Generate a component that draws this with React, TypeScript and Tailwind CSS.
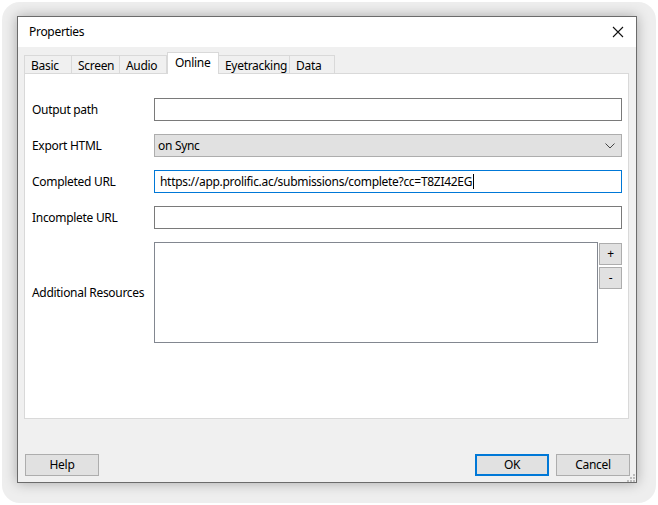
import React from "react";

const font = { fontFamily: '"Noto Sans", "Open Sans", sans-serif' };

function Tab({ label, w, selected }: { label: string; w: number; selected?: boolean }) {
  if (selected) {
    return (
      <div
        className="relative z-10 h-[22px] shrink-0 border border-b-0 border-[#d9d9d9] bg-white pl-[7px] pt-[2px] text-[12px] leading-[16px] text-black"
        style={{ width: w }}
      >
        {label}
      </div>
    );
  }
  return (
    <div
      className="h-[19px] shrink-0 border border-b-0 border-l-0 border-[#d9d9d9] bg-[#f0f0f0] pl-[6px] pt-[2px] text-[12px] leading-[16px] text-black first:border-l"
      style={{ width: w }}
    >
      {label}
    </div>
  );
}

function Row({ label, children }: { label: string; children: React.ReactNode }) {
  return (
    <div className="flex h-[23px] items-center">
      <div className="w-[122px] text-[12px] text-black">{label}</div>
      <div className="flex-1">{children}</div>
    </div>
  );
}

export default function App() {
  return (
    <div className="h-[505px] w-[658px] bg-white p-[2px] tracking-[-0.3px]" style={font}>
      <div className="h-[501px] w-[654px] rounded-[18px] bg-[#eeeeee] pl-[15px] pt-[14px]">
        <div className="flex h-[467px] w-[620px] flex-col border border-[#6b6b6b] bg-[#f0f0f0] shadow-[0_0_12px_rgba(0,0,0,0.3)]">
          {/* title bar */}
          <div className="flex h-[30px] items-center justify-between bg-white pl-[11px] pr-[9px]">
            <span className="text-[12px] text-black">Properties</span>
            <svg width="12" height="12" viewBox="0 0 12 12" className="mr-[3px]">
              <path d="M1 1L11 11M11 1L1 11" stroke="#111" strokeWidth="1.1" />
            </svg>
          </div>

          {/* tabs + pane */}
          <div className="ml-[6px] mr-[7px] mt-[5px] flex flex-col">
            <div className="flex h-[22px] items-end">
              <Tab label="Basic" w={48} />
              <Tab label="Screen" w={48} />
              <Tab label="Audio" w={47} />
              <Tab label="Online" w={52} selected />
              <Tab label="Eyetracking" w={71} />
              <Tab label="Data" w={45} />
            </div>
            <div className="-mt-px flex h-[346px] flex-col gap-[13px] border border-[#d9d9d9] bg-white pl-[7px] pr-[6px] pt-[24px]">
              <Row label="Output path">
                <div className="h-[23px] border border-[#7a7a7a] bg-white" />
              </Row>
              <Row label="Export HTML">
                <div className="flex h-[23px] items-center justify-between border border-[#adadad] bg-[#e1e1e1] pl-[3px] pr-[6px] text-[12px] text-black">
                  <span>on Sync</span>
                  <svg width="10" height="6" viewBox="0 0 10 6">
                    <path d="M0.5 0.5L5 5L9.5 0.5" fill="none" stroke="#444" strokeWidth="1" />
                  </svg>
                </div>
              </Row>
              <Row label="Completed URL">
                <div className="flex h-[23px] items-center border border-[#0078d7] bg-white pl-[5px] text-[12px] text-black">
                  <span>https://app.prolific.ac/submissions/complete?cc=T8ZI42EG</span>
                  <span className="ml-[1px] h-[15px] w-px bg-black" />
                </div>
              </Row>
              <Row label="Incomplete URL">
                <div className="h-[23px] border border-[#7a7a7a] bg-white" />
              </Row>
              <div className="flex h-[101px] items-center">
                <div className="w-[122px] text-[12px] text-black">Additional Resources</div>
                <div className="flex flex-1 items-start gap-[1px]">
                  <div className="h-[101px] flex-1 border border-[#828790] bg-white" />
                  <div className="flex flex-col gap-[2px] pt-[1px]">
                    <div className="flex h-[22px] w-[23px] items-center justify-center border border-[#adadad] bg-[#e1e1e1] text-[12px] leading-none text-black">
                      +
                    </div>
                    <div className="flex h-[22px] w-[23px] items-center justify-center border border-[#adadad] bg-[#e1e1e1] text-[12px] leading-none text-black">
                      -
                    </div>
                  </div>
                </div>
              </div>
            </div>
          </div>

          {/* buttons */}
          <div className="relative mt-[35px] flex h-[22px] items-center pl-[7px] pr-[6px]">
            <div className="flex h-[22px] w-[74px] items-center justify-center border border-[#adadad] bg-[#e1e1e1] text-[12px] text-black">
              Help
            </div>
            <div className="flex-1" />
            <div className="flex h-[22px] w-[74px] items-center justify-center border-2 border-[#0078d7] bg-[#e1e1e1] text-[12px] text-black">
              OK
            </div>
            <div className="ml-[7px] flex h-[22px] w-[74px] items-center justify-center border border-[#adadad] bg-[#e1e1e1] text-[12px] text-black">
              Cancel
            </div>
            <svg width="8" height="8" viewBox="0 0 8 8" className="absolute bottom-[-6px] right-[1px]">
              <rect x="6" y="0" width="2" height="2" fill="#bdbdbd" />
              <rect x="3" y="3" width="2" height="2" fill="#bdbdbd" />
              <rect x="6" y="3" width="2" height="2" fill="#bdbdbd" />
              <rect x="0" y="6" width="2" height="2" fill="#bdbdbd" />
              <rect x="3" y="6" width="2" height="2" fill="#bdbdbd" />
              <rect x="6" y="6" width="2" height="2" fill="#bdbdbd" />
            </svg>
          </div>
        </div>
      </div>
    </div>
  );
}
